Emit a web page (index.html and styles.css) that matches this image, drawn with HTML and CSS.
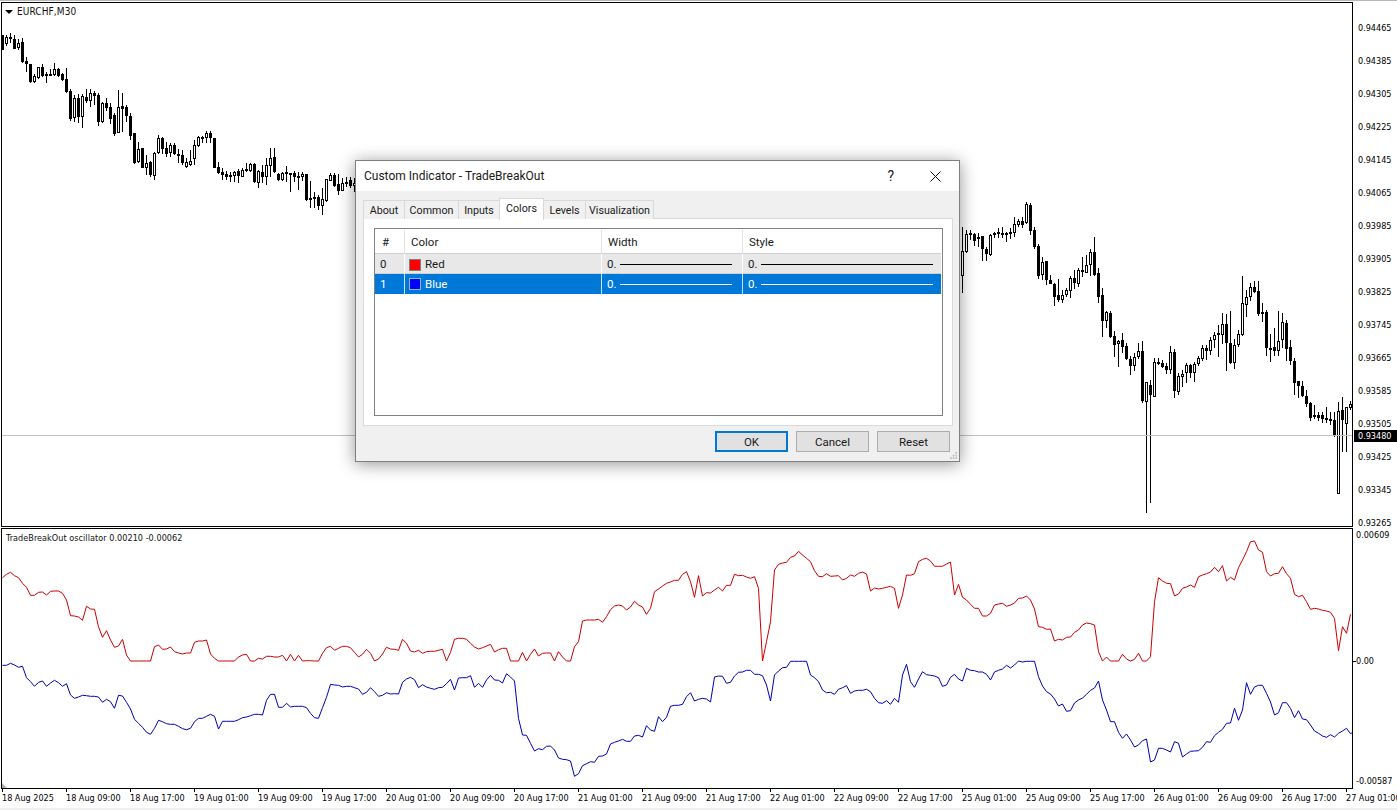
FILE: index.html
```html
<!DOCTYPE html>
<html lang="en">
<head>
<meta charset="utf-8">
<title>EURCHF,M30</title>
<link rel="stylesheet" href="styles.css">
</head>
<body>
<main class="terminal">
  <section class="pane pane-main">
    <div class="plot">
      <svg id="candles" class="plot-svg" viewBox="2 3 1350 523" aria-hidden="true"></svg>
      <div class="symbol"><span class="symbol-arrow"></span>EURCHF,M30</div>
    </div>
    <div class="axis axis-main">
      <span class="tick">0.94465</span><span class="tick">0.94385</span><span class="tick">0.94305</span><span class="tick">0.94225</span>
      <span class="tick">0.94145</span><span class="tick">0.94065</span><span class="tick">0.93985</span><span class="tick">0.93905</span>
      <span class="tick">0.93825</span><span class="tick">0.93745</span><span class="tick">0.93665</span><span class="tick">0.93585</span>
      <span class="tick">0.93505</span><span class="tick">0.93425</span><span class="tick">0.93345</span><span class="tick">0.93265</span>
      <span class="price-tag">0.93480</span>
    </div>
  </section>
  <section class="pane pane-osc">
    <div class="plot">
      <svg id="osc" class="plot-svg" viewBox="2 529 1350 259" aria-hidden="true"></svg>
      <div class="osc-title">TradeBreakOut oscillator 0.00210 -0.00062</div>
      <span class="corner"></span>
    </div>
    <div class="axis axis-osc">
      <span class="tick">0.00609</span><span class="tick">0.00</span><span class="tick">-0.00587</span>
    </div>
  </section>
  <footer class="time-axis">
    <span>18 Aug 2025</span><span>18 Aug 09:00</span><span>18 Aug 17:00</span><span>19 Aug 01:00</span><span>19 Aug 09:00</span><span>19 Aug 17:00</span>
    <span>20 Aug 01:00</span><span>20 Aug 09:00</span><span>20 Aug 17:00</span><span>21 Aug 01:00</span><span>21 Aug 09:00</span><span>21 Aug 17:00</span>
    <span>22 Aug 01:00</span><span>22 Aug 09:00</span><span>22 Aug 17:00</span><span>25 Aug 01:00</span><span>25 Aug 09:00</span><span>25 Aug 17:00</span>
    <span>26 Aug 01:00</span><span>26 Aug 09:00</span><span>26 Aug 17:00</span><span>27 Aug 01:00</span>
  </footer>
</main>

<div class="dialog" role="dialog">
  <header class="dialog-title">
    <span class="dialog-name">Custom Indicator - TradeBreakOut</span>
    <span class="dialog-help">?</span>
    <svg class="dialog-close" viewBox="0 0 11 11" aria-hidden="true"><path d="M.5.5l10 10M10.500.5l-10 10"/></svg>
  </header>
  <nav class="tabs">
    <span class="tab tab-about">About</span><span class="tab tab-common">Common</span><span class="tab tab-inputs">Inputs</span><span class="tab tab-colors is-active">Colors</span><span class="tab tab-levels">Levels</span><span class="tab tab-vis">Visualization</span>
  </nav>
  <div class="tab-panel">
    <div class="list">
      <div class="list-row list-head">
        <span class="cell cell-head-num">#</span><span class="cell cell-head">Color</span><span class="cell cell-head">Width</span><span class="cell cell-head">Style</span>
      </div>
      <div class="list-row row-alt">
        <span class="cell cell-num">0</span>
        <span class="cell cell-color"><i class="swatch swatch-red"></i>Red</span>
        <span class="cell cell-line"><b>0.</b><i class="stroke stroke-w"></i></span>
        <span class="cell cell-line"><b>0.</b><i class="stroke stroke-s"></i></span>
      </div>
      <div class="list-row row-selected">
        <span class="cell cell-num">1</span>
        <span class="cell cell-color"><i class="swatch swatch-blue"></i>Blue</span>
        <span class="cell cell-line"><b>0.</b><i class="stroke stroke-w"></i></span>
        <span class="cell cell-line"><b>0.</b><i class="stroke stroke-s"></i></span>
      </div>
    </div>
  </div>
  <div class="actions">
    <button class="btn btn-default">OK</button><button class="btn">Cancel</button><button class="btn">Reset</button>
  </div>
  <svg class="grip" viewBox="0 0 9 9" aria-hidden="true">
    <path d="M6 0h2v2H6zM3 3h2v2H3zM6 3h2v2H6zM0 6h2v2H0zM3 6h2v2H3zM6 6h2v2H6z"/>
  </svg>
</div>
<script src="chart.js"></script>
</body>
</html>
```
FILE: styles.css
```css
* { box-sizing: border-box; }
html, body { margin: 0; height: 100%; }
body {
  width: 1397px;
  height: 810px;
  overflow: hidden;
  background: #f0f0f0;
  font-family: "DejaVu Sans Condensed", "DejaVu Sans", sans-serif;
  color: #000;
}
.terminal {
  display: flex;
  flex-direction: column;
  height: 808px;
  background: #fff;
  padding-top: 2px;
  border-top: 0;
  box-shadow: inset 0 1px 0 #b8b8b8;
}
.pane { display: flex; position: relative; }
.pane-main { height: 525px; margin-bottom: 1px; }
.pane-osc { height: 261px; }
.plot {
  position: relative;
  width: 1352px;
  margin-left: 1px;
  border: 1px solid #000;
  background: #fff;
  overflow: hidden;
}
.plot-svg { display: block; width: 1350px; height: 100%; }
.symbol {
  position: absolute;
  left: 3px;
  top: 3px;
  display: flex;
  align-items: center;
  font-size: 10px;
  line-height: 12px;
  letter-spacing: .1px;
  color: #111;
}
.symbol-arrow {
  width: 0;
  height: 0;
  margin-right: 4px;
  border-left: 4px solid transparent;
  border-right: 4px solid transparent;
  border-top: 4px solid #000;
}
.osc-title {
  position: absolute;
  left: 4px;
  top: 3px;
  font-size: 9px;
  line-height: 12px;
  letter-spacing: .05px;
  color: #111;
}
.corner {
  position: absolute;
  left: 0;
  bottom: 0;
  width: 0;
  height: 0;
  border-left: 5px solid #b0b0b0;
  border-top: 5px solid transparent;
}
.axis {
  position: relative;
  flex: 1;
  display: flex;
  flex-direction: column;
  font-size: 9px;
  line-height: 13px;
  background: #fff;
}
.axis-main { padding: 20px 0 0 5px; gap: 20px; }
.axis-osc { padding: 1px 0 0 3px; }
.axis-osc .tick:nth-child(2) { margin-top: 113px; }
.axis-osc .tick:nth-child(3) { margin-top: 107px; }
.tick { position: relative; display: block; height: 13px; white-space: nowrap; }
.axis-osc .tick:nth-child(2)::before {
  content: "";
  position: absolute;
  left: -3px;
  top: 6px;
  width: 3px;
  height: 1px;
  background: #000;
}
.price-tag {
  position: absolute;
  left: 1px;
  top: 428px;
  width: 44px;
  height: 12px;
  line-height: 12px;
  padding-left: 4px;
  background: #000;
  color: #fff;
}
.time-axis {
  display: flex;
  height: 19px;
  padding-left: 2px;
  font-size: 9px;
  line-height: 13px;
  background: #fff;
  overflow: hidden;
  white-space: nowrap;
}
.time-axis span {
  position: relative;
  flex: 0 0 64px;
  padding-top: 3px;
}
.time-axis span::before {
  content: "";
  position: absolute;
  left: 0;
  top: 0;
  width: 1px;
  height: 3px;
  background: #000;
}

/* dialog */
.dialog {
  position: absolute;
  left: 355px;
  top: 160px;
  width: 605px;
  height: 302px;
  background: #f0f0f0;
  border: 1px solid #7f7f7f;
  box-shadow: 0 2px 16px rgba(0, 0, 0, .42);
  font-family: Roboto, "Noto Sans", sans-serif;
  font-size: 11.500px;
  color: #1a1a1a;
}
.dialog-title {
  display: flex;
  align-items: center;
  height: 30px;
  padding: 0 18px 0 8px;
  background: #fff;
}
.dialog-name { flex: 1; font-size: 12px; }
.dialog-help { margin-right: 36px; font-size: 14px; }
.dialog-close { width: 11px; height: 11px; fill: none; stroke: #111; stroke-width: 1; }
.tabs {
  display: flex;
  align-items: flex-end;
  height: 28px;
  padding-left: 7px;
  position: relative;
  z-index: 1;
  margin-bottom: -1px;
  font-size: 10.700px;
}
.tab {
  display: block;
  height: 19px;
  text-align: center;
  line-height: 19px;
  background: #f0f0f0;
  border: 1px solid #d9d9d9;
  border-bottom: 0;
  border-left: 0;
}
.tab-about { width: 42px; border-left: 1px solid #d9d9d9; }
.tab-common { width: 54px; }
.tab-inputs { width: 41px; }
.tab-colors { width: 44px; }
.tab-levels { width: 42px; }
.tab-vis { width: 68px; }
.tab.is-active {
  height: 22px;
  line-height: 19px;
  background: #fff;
  border-left: 1px solid #d9d9d9;
  margin-left: -1px;
  width: 45px;
  margin-bottom: -1px;
  position: relative;
  z-index: 2;
}
.tab-panel {
  width: 590px;
  height: 208px;
  margin-left: 7px;
  padding: 9px 9px 9px 10px;
  background: #fff;
  border: 1px solid #d9d9d9;
}
.list {
  height: 188px;
  border: 1px solid #828282;
  padding-right: 1px;
  background: #fff;
}
.list-row {
  display: grid;
  grid-template-columns: 30px 197px 141px 198px;
  line-height: 19px;
}
.list-head { height: 25px; padding-top: 1px; border-bottom: 1px solid #d0d0d0; line-height: 24px; }
.cell { display: flex; align-items: center; border-right: 1px solid #e4e4e4; white-space: nowrap; }
.cell:last-child { border-right: 0; }
.cell-head { padding-left: 6px; }
.cell-head-num { padding-left: 7px; }
.cell-num { padding-left: 5px; }
.cell-color { padding-left: 4px; }
.cell-line { padding-left: 5px; }
.cell-line b { display: block; width: 13px; font-weight: 400; }
.row-alt { height: 20px; background: #e8e8e8; border-bottom: 1px solid #d0d0d0; }
.row-alt .cell { border-right-color: #fff; padding-top: 1px; }
.row-selected { height: 20px; background: #0078d7; color: #fff; }
.row-selected .cell { border-right-color: #cfe4f6; }
.swatch {
  width: 12px;
  height: 12px;
  margin-right: 4px;
  border: 1px solid #808080;
}
.swatch-red { background: #f00; }
.swatch-blue { background: #00f; border-color: #8fb4e0; }
.stroke { display: block; height: 1px; background: currentColor; }
.row-alt .stroke { background: #000; }
.stroke-w { width: 112px; }
.stroke-s { width: 172px; }
.actions {
  display: flex;
  justify-content: flex-end;
  gap: 8px;
  padding: 5px 9px 0 0;
}
.btn {
  width: 73px;
  height: 21px;
  padding: 0;
  font: inherit;
  color: #1a1a1a;
  background: #e1e1e1;
  border: 1px solid #adadad;
}
.btn-default { border: 2px solid #0078d7; }
.grip {
  position: absolute;
  right: 1px;
  bottom: 1px;
  width: 8px;
  height: 8px;
  fill: #c0c0c0;
}
```
FILE: chart.js
```js
var NS = "http://www.w3.org/2000/svg";
function add(svg, name, attrs) {
  var el = document.createElementNS(NS, name);
  for (var k in attrs) el.setAttribute(k, attrs[k]);
  svg.appendChild(el);
  return el;
}
// hi, bodyTop, bodyBottom, lo, hollow — read in 3x reference pixels
var leftCandles = [
[105,105,150,150,0],[105,110,132,138,1],[100,112,118,128,0],[105,118,147,147,0],[118,128,145,150,1],[115,127,185,188,0],[170,183,193,215,0],[193,193,245,248,0],[222,228,245,250,1],[202,202,235,237,1],
[193,202,228,232,0],[215,222,228,250,1],[208,222,224,228,1],[190,208,224,228,1],[203,207,228,230,0],[218,222,240,244,0],[205,238,275,278,0],[268,272,358,362,0],[285,295,355,365,1],[282,295,352,370,0],
[283,287,352,383,1],[268,290,302,308,0],[268,280,302,322,1],[272,280,287,315,0],[280,285,365,378,0],[305,310,365,368,1],[295,310,323,333,0],[310,322,356,372,0],[338,345,402,407,0],[270,322,398,400,1],
[278,318,326,395,0],[315,322,349,365,0],[338,349,407,420,0],[400,400,490,492,0],[425,448,485,490,1],[445,445,503,503,0],[465,490,503,525,1],[483,485,525,530,0],[455,458,527,540,1],[405,415,460,462,1],
[412,414,447,462,0],[425,445,462,472,0],[430,435,460,470,1],[430,435,463,465,0],[448,462,467,490,0],[450,466,490,495,0],[475,485,502,504,1],[450,484,496,497,1],[420,435,476,495,1],[408,412,437,442,1],
[408,412,416,430,0],[393,400,415,430,1],[392,398,415,430,0],[414,414,503,503,0],[487,501,520,522,0],[505,517,524,540,0],[513,522,530,540,0],[515,525,530,545,0],[514,516,528,545,1],[508,512,528,548,0],
[505,510,530,530,1],[490,508,510,515,0],[488,492,512,515,1],[490,491,546,548,0],[510,513,548,565,1],[495,516,530,548,0],[475,496,530,555,1],[445,474,498,530,1],[445,472,517,520,0],[518,522,540,542,0],
[515,518,540,542,1],[498,516,520,545,0],[518,518,520,575,0],[513,519,530,545,0],[515,528,530,570,0],[515,522,532,542,1],[521,521,600,603,0],[543,595,598,625,0],[575,592,598,625,1],[585,592,618,630,0],
[565,598,618,645,1],[537,537,602,605,1],[520,525,542,543,1],[520,524,558,560,0],[522,552,572,585,0],[533,548,572,573,1],[530,545,550,560,0],[530,541,558,565,0],[535,548,558,575,1]];
var rightCandles = [
[110,183,257,308,1],[120,133,185,188,1],[120,130,134,150,0],[128,132,152,168,0],[130,142,148,170,1],[138,138,176,212,0],[172,177,191,212,0],[132,135,195,197,1],[125,130,133,145,0],[115,127,132,143,0],
[110,130,134,145,0],[125,130,131,155,0],[115,127,130,148,0],[82,103,128,140,1],[88,94,104,112,1],[82,92,106,115,0],[35,43,100,102,1],[38,45,122,135,0],[112,120,172,178,0],[163,168,257,268,0],
[200,217,255,270,1],[213,213,270,285,0],[255,271,281,283,0],[278,282,320,348,0],[268,316,330,335,0],[300,314,331,340,1],[293,300,314,322,1],[258,263,304,325,1],[240,265,279,298,0],[233,241,282,290,1],
[200,241,245,262,0],[195,226,248,250,1],[178,187,225,258,1],[142,186,255,258,0],[235,250,320,340,0],[295,316,392,440,0],[362,367,392,415,1],[362,369,440,443,0],[422,438,464,500,0],[450,452,463,530,1],
[430,450,470,490,0],[458,468,508,510,0],[498,507,527,555,0],[490,500,527,542,1],[460,483,500,508,1],[453,483,632,640,0],[575,577,635,970,1],[570,586,614,938,0],[503,515,620,620,1],[505,515,519,525,0],
[510,518,530,535,0],[520,528,540,552,0],[468,487,540,552,1],[478,487,602,625,0],[550,559,605,615,1],[540,551,561,590,1],[520,526,550,578,1],[522,526,548,565,0],[515,521,550,575,1],[497,505,521,527,1],
[465,475,507,512,1],[465,473,484,510,0],[440,449,482,495,1],[425,436,450,475,1],[405,430,435,500,0],[370,401,434,462,1],[372,403,460,542,0],[363,458,520,522,0],[448,465,520,536,1],[420,433,465,470,1],
[258,340,436,437,1],[300,320,344,380,1],[280,291,320,332,1],[272,292,306,310,0],[272,303,372,377,0],[340,367,369,395,0],[360,366,473,498,0],[432,473,480,515,0],[415,472,484,497,0],[363,454,484,498,1],
[370,397,450,475,1],[390,400,476,512,0],[450,472,512,525,0],[503,514,578,615,0],[572,574,587,625,0],[572,587,617,620,0],[600,618,642,650,0],[635,640,684,694,0],[645,675,681,688,0],[665,676,683,693,0],
[665,675,686,698,0],[652,683,690,698,0],[665,687,690,705,0],[665,690,737,740,0],[635,664,913,913,1],[622,660,690,785,0],[650,652,703,785,1],[632,643,654,660,1]];

var red = [158,148,142,152,158,175,187,211,211,202,201,210,199,198,198,205,225,272,273,276,286,244,252,253,305,337,317,345,367,363,343,390,408,408,408,408,408,408,365,360,373,372,366,380,384,387,384,384,352,348,348,345,387,400,408,408,408,408,408,396,390,388,408,408,400,402,394,394,396,396,391,408,388,408,391,408,407,407,408,408,385,368,364,376,370,364,364,368,382,396,388,373,385,408,402,387,367,372,373,376,343,355,378,381,376,385,380,379,379,376,373,408,382,343,
340,340,343,355,366,372,368,363,358,381,374,370,370,408,408,408,382,408,388,372,393,385,384,384,408,380,396,408,408,365,350,288,285,285,285,283,292,275,254,243,240,243,255,246,229,240,246,268,250,200,192,183,175,171,166,166,148,140,170,217,152,213,203,204,195,187,198,181,181,148,152,151,156,160,155,190,408,350,290,135,118,114,112,97,93,79,90,100,110,137,154,155,146,154,153,152,165,160,150,154,145,141,147,198,189,192,190,187,184,190,250,210,150,151,146,110,
103,100,108,124,124,124,117,111,210,178,217,225,238,250,250,273,273,265,240,237,235,244,240,234,220,219,213,225,252,305,307,313,312,348,343,345,337,336,322,315,300,294,296,300,380,408,396,408,408,408,388,402,408,403,385,408,408,395,230,158,168,175,176,213,207,190,186,180,187,155,150,146,141,127,140,122,168,157,165,128,105,80,50,48,75,82,140,153,146,145,125,146,160,208,215,211,230,253,250,252,256,258,262,280,377,305,325,268];
var blue = [421,421,415,420,427,424,458,470,484,472,468,484,474,466,473,484,476,510,520,516,511,512,514,514,516,532,523,530,550,511,513,532,552,583,595,607,622,628,610,586,590,596,598,598,604,611,614,610,590,580,580,574,568,574,612,589,589,589,589,584,578,576,572,568,568,570,526,508,508,547,547,535,546,544,544,544,548,565,578,580,548,517,478,480,481,486,484,484,488,492,508,502,488,500,514,511,503,507,506,507,472,462,457,464,488,479,486,490,493,488,487,476,463,495,459,
458,458,452,487,475,487,465,451,465,466,474,446,456,468,580,630,631,655,678,671,674,664,663,675,699,703,704,708,754,746,722,716,710,712,694,693,687,657,652,648,643,649,649,633,631,636,602,615,619,575,590,577,544,541,541,538,515,503,528,523,520,522,531,456,453,454,475,472,453,442,441,436,436,448,448,452,480,528,450,438,428,427,409,409,409,409,409,450,458,470,495,503,502,508,493,488,482,505,498,496,496,493,500,520,533,535,527,538,520,532,450,418,470,487,462,440,
449,451,453,458,484,480,457,448,462,468,430,436,437,441,441,448,465,441,436,432,421,429,420,408,411,409,409,409,455,483,500,507,522,543,537,559,557,534,525,519,508,496,489,468,525,555,590,590,622,640,627,645,666,660,647,642,711,705,670,670,675,681,650,655,696,687,679,678,677,667,650,652,632,622,613,595,594,550,586,555,473,508,486,481,481,505,531,570,563,533,533,550,578,557,582,584,600,618,625,633,637,629,636,625,618,610,626,619];

function drawCandle(svg, c, d, y0) {
  var px = function (v) { return Math.round(y0 + v / 3); };
  var hi = px(d[0]), top = px(d[1]), bot = px(d[2]), lo = px(d[3]);
  add(svg, "rect", { x: c, y: hi, width: 1, height: Math.max(lo - hi, 1), fill: "#000" });
  if (d[4]) {
    add(svg, "rect", { x: c - 0.5, y: top + 0.5, width: 2, height: Math.max(bot - top - 1, 1), fill: "#fff", stroke: "#000", "stroke-width": 1 });
  } else {
    add(svg, "rect", { x: c - 1, y: top, width: 3, height: Math.max(bot - top, 2), fill: "#000" });
  }
}
var main = document.getElementById("candles");
leftCandles.forEach(function (d, i) { drawCandle(main, 2 + 4 * i, d, 0); });
rightCandles.forEach(function (d, i) { drawCandle(main, 962 + 4 * i, d, 190); });
add(main, "rect", { x: 2, y: 435, width: 1350, height: 1, fill: "#c0c0c0" });
main.setAttribute("shape-rendering", "crispEdges");

var osc = document.getElementById("osc");
function drawLine(values, colour) {
  var pts = values.map(function (v, i) { return (2.5 + 4 * i) + "," + (525 + v / 3).toFixed(1); }).join(" ");
  add(osc, "polyline", { points: pts, fill: "none", stroke: colour, "stroke-width": 1, "stroke-linejoin": "round" });
}
drawLine(red, "#cc0000");
drawLine(blue, "#0000b4");
```
